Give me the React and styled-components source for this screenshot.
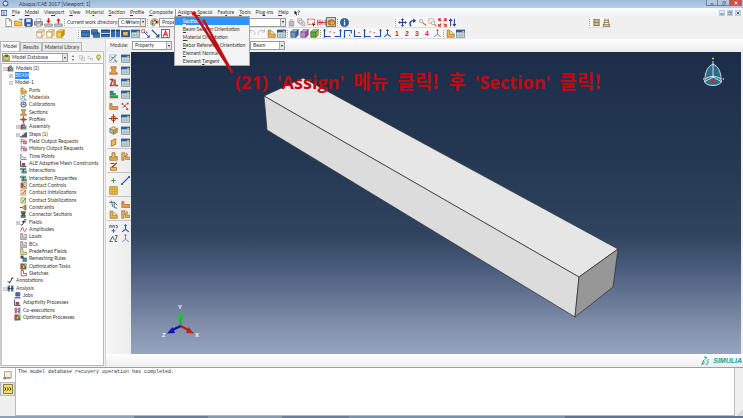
import React from 'react'
import styled, { createGlobalStyle, css } from 'styled-components'

const GlobalStyle = createGlobalStyle`
  * {
    box-sizing: border-box;
  }
  body {
    margin: 0;
    background: #f0f0f0;
    color: #383838;
    font-family: Lato, "Noto Sans CJK KR", sans-serif;
    font-size: 5px;
    line-height: 7px;
  }
  button, select, input {
    margin: 0;
    padding: 0;
    border: 0;
    background: none;
    color: inherit;
    font: inherit;
  }
  ul {
    margin: 0;
    padding: 0;
    list-style: none;
  }
`

/* ---------- icons, all on a 12 x 12 grid ---------- */

const Svg = styled.svg`
  display: block;
  flex: none;
  width: ${p => p.$size || 9}px;
  height: ${p => p.$size || 9}px;
`

const cube = (a, b, c, line) => (
  <g stroke={line} strokeWidth="0.9" strokeLinejoin="round">
    <path d="M1 4l3-3h7L8 4z" fill={a} />
    <path d="M1 4h7v7H1z" fill={b} />
    <path d="M8 4l3-3v7l-3 3z" fill={c} />
  </g>
)
const axes = (d, label, x, y) => (
  <>
    <path d={d} fill="none" stroke="#1c4f9c" strokeWidth="1.5" />
    <path d={`M${x} ${y}l1.5 1.5M${x + 1.5} ${y}l-1.5 1.5`} stroke="#c33" strokeWidth="1" />
    {label && <path d="M2 9.2v2.4M.8 10.4h2.4" stroke="#1c4f9c" />}
  </>
)
const lShape = (fill, extra) => (
  <>
    <path d="M1.5 1.5H5V7h6v4H1.5z" fill={fill} stroke="#9a6a20" strokeWidth="0.9" />
    {extra}
  </>
)

const glyphs = {
  app: (
    <>
      <circle cx="6" cy="6" r="4.2" fill="#d6e6f7" stroke="#3b4d72" strokeWidth="1.5" />
      <path d="M6 0v3M1 9l3-1M11 9l-3-1" stroke="#3b4d72" strokeWidth="1.2" />
    </>
  ),
  model: (
    <>
      <rect x="0.5" y="1" width="11" height="10" fill="#fff" stroke="#254f9b" strokeWidth="1.6" />
      <path d="M3 4h6M3 6h4M3 8.5h6" stroke="#254f9b" strokeWidth="1.3" />
    </>
  ),
  fresh: <path d="M2.5.7h4.8L10 3.4v8H2.5zM7 1v3h3" fill="#fff" stroke="#666" strokeWidth="0.9" />,
  open: (
    <>
      <path d="M.5 10.5V4h4l1 1.2h5v5.3z" fill="#f1c14b" stroke="#a97922" strokeWidth="0.9" />
      <path d="M6 3c1-2 3-2 4.5-.5M10.800 .5v2.300H8.500" fill="none" stroke="#445" strokeWidth="0.9" />
    </>
  ),
  save: (
    <>
      <rect x="1" y="1" width="10" height="10" rx="1" fill="#345fae" stroke="#233c74" />
      <path d="M3 1.5h6v4H3z" fill="#dce6f5" />
      <path d="M4 8h4.5v3H4z" fill="#b8c6dc" />
    </>
  ),
  print: (
    <>
      <path d="M3 1h6v4H3z" fill="#fff" stroke="#777" strokeWidth="0.8" />
      <path d="M.7 5h10.6v4.5H.7z" fill="#b6bcc4" stroke="#555" strokeWidth="0.9" />
      <path d="M3 8h6v3H3z" fill="#f4f4f4" stroke="#777" strokeWidth="0.8" />
    </>
  ),
  dbIn: (
    <>
      <path d="M6 0v5" stroke="#c22" strokeWidth="2" />
      <path d="M3 3.8h6L6 7.3z" fill="#c22" />
      <path d="M1 8h10v3H1z" fill="#c8cdd6" stroke="#666" strokeWidth="0.8" />
    </>
  ),
  dbOut: (
    <>
      <path d="M6 3v4.5" stroke="#c22" strokeWidth="2" />
      <path d="M3 3.6h6L6 .2z" fill="#c22" />
      <path d="M1 8h10v3H1z" fill="#c8cdd6" stroke="#666" strokeWidth="0.8" />
    </>
  ),
  palette: (
    <>
      <path d="M6 1C2 1 .6 4 .8 6.5 1 9.6 4 11 5.5 10.6c1.6-.6 0-2 1.4-2.8 1.5-.8 4.400.2 4.400-2.300C11.300 2.500 8.500 1 6 1z" fill="#e6c99b" stroke="#8d6a35" strokeWidth="0.8" />
      <circle cx="3.5" cy="4.5" r="1.3" fill="#2e8e40" />
      <circle cx="6.7" cy="3.3" r="1.3" fill="#c33" />
      <circle cx="3.5" cy="7.8" r="1.3" fill="#2c58b5" />
      <circle cx="9" cy="5.3" r="1.2" fill="#222" />
    </>
  ),
  lamp: (
    <>
      <path d="M3 4h6v6H3z" fill="#bcbcbc" stroke="#999" />
      <path d="M4 2h4M2 11h8" stroke="#aaa" />
    </>
  ),
  stack: (
    <g fill="#eee" stroke="#999" strokeWidth="0.9">
      <path d="M1 1h5v5H1z" />
      <path d="M3 3h5v5H3z" />
      <path d="M5.5 5.5h5v5h-5zM5.5 5.5l5 5" />
    </g>
  ),
  pick: (
    <>
      <path d="M1 1.5h9v7H1z" fill="none" stroke="#d63a2e" strokeWidth="1.2" strokeDasharray="2 1" />
      <path d="M7 6l4.5 3-2 .5-1 2z" fill="#333" />
    </>
  ),
  cut: (
    <>
      <path d="M1 2v8M11 2v8M4 2v8" stroke="#c33" strokeWidth="1.3" />
      <path d="M1 6h10M8 3.5L5 6l3 2.5" fill="none" stroke="#c33" strokeWidth="1.3" />
    </>
  ),
  orange: (
    <>
      <ellipse cx="6" cy="6" rx="4.8" ry="3.6" fill="#f2a63b" stroke="#8d5a12" />
      <path d="M2 5c2-1.5 6-1.5 8 0M4 3v6" fill="none" stroke="#8d5a12" strokeWidth="0.8" />
    </>
  ),
  info: (
    <>
      <circle cx="6" cy="6" r="5.4" fill="#2e64a7" stroke="#1f4475" strokeWidth="0.8" />
      <path d="M6 5v4.5M6 2.3v1.6" stroke="#fff" strokeWidth="1.7" />
    </>
  ),
  pan: <path d="M6 1v10M1 6h10M4.3 2.7L6 1l1.7 1.7M4.3 9.3L6 11l1.7-1.7M2.7 4.3L1 6l1.7 1.7M9.3 4.3L11 6 9.3 7.7" fill="none" stroke="#223b8f" strokeWidth="1.3" />,
  rotate: (
    <>
      <path d="M4 11C1 7 3 3.5 7.5 3.5" fill="none" stroke="#223b8f" strokeWidth="1.9" />
      <path d="M6.8.5L11 3.5 6.8 6.7z" fill="#223b8f" />
    </>
  ),
  zoom: (
    <>
      <path d="M6 6l5 4" stroke="#c6873e" strokeWidth="1.8" />
      <circle cx="4" cy="4" r="2.4" fill="#eef3f7" stroke="#99a" />
    </>
  ),
  zoomBox: (
    <>
      <path d="M1 1h7v6H1z" fill="none" stroke="#d55" strokeDasharray="1.5 1" />
      <path d="M8 8l3.5 3" stroke="#c6873e" strokeWidth="1.7" />
      <circle cx="6.8" cy="6.5" r="2.3" fill="#fff" stroke="#99a" />
    </>
  ),
  fit: <path d="M1 4V1h3M8 1h3v3M11 8v3H8M4 11H1V8M1 1l3.5 3.5M11 1L7.5 4.5M1 11l3.5-3.5M11 11L7.5 7.5" fill="none" stroke="#d8352a" strokeWidth="1.5" />,
  cycle: <path d="M3.5 11V1.5M1.5 4l2-2.5 2 2.5M8.5 1v9.5M6.5 8l2 2.5 2-2.5" fill="none" stroke="#223b8f" strokeWidth="1.4" />,
  book: <path d="M2.5 1v10M9.5 1v10M2.5 2h7M2.5 4h7M2.5 6h7M2.5 8h7M2.5 10h7" stroke="#8a713a" strokeWidth="1.2" />,
  road: <path d="M4 1L2 11M8 1l2 10M3.5 3h5M3 6h6M1 9h10M1 11h10" stroke="#8a713a" strokeWidth="1.2" />,
  wire: cube('#fff', 'none', '#fff', '#b58a2e'),
  hidden: cube('#fbf5df', '#fdf9ec', '#efe3b8', '#b58a2e'),
  solid: cube('#ffe681', '#f7cf3a', '#c9971c', '#a8821c'),
  win1: <path d="M.5 2h11v8.5H.5zM.5 4.5h11" fill="#3d7ab8" stroke="#204a7c" />,
  win2: <path d="M.5 1h8v6h-8zM3 5h8.5v6H3z" fill="#3d7ab8" stroke="#204a7c" />,
  win3: (
    <>
      <path d="M0 1h12v4.500H0zM0 6.500h12V11H0z" fill="#2f6dae" />
      <path d="M0 1h12v1.500H0zM0 6.500h12V8H0z" fill="#1d4472" />
    </>
  ),
  win4: (
    <>
      <path d="M0 1h5.500v10H0zM6.500 1H12v10H6.500z" fill="#2f6dae" />
      <path d="M0 1h5.500v2H0zM6.500 1H12v2H6.500z" fill="#1d4472" />
    </>
  ),
  frame: (
    <>
      <rect x="0.5" y="2" width="11" height="8.5" fill="#305f98" stroke="#24456c" />
      <path d="M3 4h6v4.500H3z" fill="#f2b95b" />
    </>
  ),
  table: (
    <>
      <rect x="0.5" y="1.5" width="11" height="9.5" fill="#dfe9ee" stroke="#6c8798" />
      <path d="M0 1h12v3.500H0z" fill="#2b5d91" />
      <path d="M1 7h10M1 9h10M4.3 4.5v6M7.8 4.5v6" stroke="#8fa4b1" strokeWidth="0.8" />
      <path d="M8 2.5h3v2H8z" fill="#e0b63d" />
    </>
  ),
  swap: (
    <>
      <path d="M1 1h4v4H1z" fill="#fff" stroke="#c33" />
      <path d="M4 4l7 7M7 3.5L8.5 6M8 11h3V8" fill="none" stroke="#2e4f99" strokeWidth="1.3" />
    </>
  ),
  arrow: <path d="M1 1l9.5 9.5M6.5 10.500h4v-4" fill="none" stroke="#244fa3" strokeWidth="1.5" />,
  text: (
    <>
      <rect x="0.7" y="0.7" width="10.6" height="10.6" fill="#fff" stroke="#444" />
      <path d="M3 10l3-7.5L9 10M4 7.5h4" fill="none" stroke="#d22" strokeWidth="1.4" />
    </>
  ),
  undo: <path d="M2 3c5-3 10 0 8 5M2 0v4h4" fill="none" stroke="#bbb" strokeWidth="1.2" />,
  redo: <path d="M10 3C5 0 0 3 2 8M10 0v4H6" fill="none" stroke="#bbb" strokeWidth="1.2" />,
  part: lShape('#eab44a', <path d="M6 2.5L10.500 7" stroke="#8b651b" />),
  mesh1: cube('#b7d1ea', '#6d98c4', '#3b699b', '#345274'),
  mesh2: cube('#f0c9e8', '#c48ac4', '#975b9b', '#6a4274'),
  mesh3: cube('#bcd98e', '#5ea83e', '#e0b23a', '#3e6a24'),
  ax1: axes('M2 2v8h8M1 3l1-2 1 2', true, 9, 3),
  ax2: axes('M10 2v8H2M9 3l1-2 1 2', false, 1, 4),
  ax3: axes('M2 11V2h9v4', true, 8, 8),
  ax4: axes('M2 1v9h9', false, 7, 4),
  triad: <path d="M6 1v6l-4.500 3.500M6 7l4.500 3.500M4.500 2.500L6 1l1.500 1.500" fill="none" stroke="#2c5db0" strokeWidth="1.400" />,
  tower: <path d="M4 5.500v-2H2.500V1h7v2.500H8v2L9 9h2v2H1V9h2z" fill="#e3a04e" stroke="#9b6322" strokeWidth="0.9" />,
  beamMgr: (
    <>
      <path d="M1 2h4L2 10h4M8 2v8h4" fill="none" stroke="#b8352b" strokeWidth="1.800" />
      <path d="M6.500 2v8" stroke="#3c8b42" strokeWidth="1.500" />
    </>
  ),
  layers: (
    <>
      <path d="M1 1h5v3H1z" fill="#2f6fc0" />
      <path d="M1 4h8v3H1z" fill="#2d9a47" />
      <path d="M1 7h11v2.500H1z" fill="#2ca53f" />
      <path d="M1 9.500h11V11H1z" fill="#b7364f" />
    </>
  ),
  material: (
    <>
      <path d="M1 1h7v10H1z" fill="#eef4f8" stroke="#8aa" strokeWidth="0.8" />
      <path d="M2 9l8-8M3 4l2 1M7 8l3 2" stroke="#2e6096" strokeWidth="1.300" />
      <circle cx="10" cy="10" r="1.500" fill="#c9a23b" />
    </>
  ),
  scatter: (
    <>
      <path d="M1 2l4 3 4-3M2 8l3-3 5 5" fill="none" stroke="#777" />
      <g fill="#cc3a30">
        <circle cx="2" cy="2.500" r="1.300" />
        <circle cx="9" cy="2" r="1.300" />
        <circle cx="5" cy="5.500" r="1.300" />
        <circle cx="8" cy="9.500" r="1.300" />
      </g>
    </>
  ),
  lpart: <path d="M1 2h3v4h8v4H1z" fill="#e39a4c" stroke="#9b6328" strokeWidth="0.8" />,
  target: (
    <>
      <circle cx="6" cy="6" r="3.200" fill="#f1b09a" stroke="#a43c22" />
      <path d="M6 0v12M0 6h12" stroke="#a43c22" strokeWidth="1.400" />
    </>
  ),
  box: (
    <g stroke="#6d6a52" strokeWidth="0.8">
      <path d="M6 1l5 2.500L6 6 1 3.500z" fill="#f1d088" />
      <path d="M1 3.500L6 6v5L1 8.500z" fill="#9eb6cf" />
      <path d="M11 3.500L6 6v5l5-2.500z" fill="#d59c3e" />
    </g>
  ),
  plate: <path d="M3 3.500L9 1v7.500L3 11z" fill="#f0b550" stroke="#8e6a2c" />,
  press: (
    <>
      <path d="M4 1h4v5h3v5H1V6h3z" fill="#edc06a" stroke="#8b6a2a" />
      <path d="M2 8h8" stroke="#8b6a2a" />
    </>
  ),
  pressCut: (
    <>
      <path d="M1 1v10h3V6h2v4h6V7H8V4H5V1z" fill="#e9ad5c" stroke="#8b6a2a" strokeWidth="0.8" />
      <path d="M7 1l2 3" stroke="#c33" />
    </>
  ),
  brush: (
    <>
      <path d="M2 7h8v4H2z" fill="#edc06a" stroke="#8b6a2a" />
      <path d="M10.500 1L4 7M2 2h5" stroke="#93392f" strokeWidth="1.600" />
    </>
  ),
  plus: <path d="M6 3v6M3 6h6" stroke="#3c9d41" strokeWidth="1.400" />,
  line: (
    <>
      <path d="M1.500 10.500l9-9" stroke="#224a86" strokeWidth="1.400" />
      <path d="M0 9.500h2.500V12H0zM9.500 0H12v2.500H9.500z" fill="#2e64a7" />
    </>
  ),
  grid: (
    <>
      <rect x="1" y="1" width="10" height="10" fill="#f3c64b" stroke="#a9822b" />
      <path d="M4.300 1v10M7.700 1v10M1 4.300h10M1 7.700h10" stroke="#b98d2d" strokeWidth="0.8" />
    </>
  ),
  split: <path d="M0 3h7l4 4M3 1l2 8M7 3v7l4 1" fill="none" stroke="#39677e" strokeWidth="1.200" />,
  datum: (
    <>
      <path d="M1 5V2h2v3M5 5V2h2v3M9 2h2v3H9" fill="none" stroke="#444" />
      <path d="M6 6.500v5M3.500 9h5" stroke="#2d62b4" strokeWidth="1.300" />
    </>
  ),
  sketch: <path d="M1 10l4-7 2 5M1 10h4M8 2h3L8 10h3" fill="none" stroke="#555" strokeWidth="1.200" />,
  triad2: (
    <>
      <path d="M6 1v6l-4.500 3.500M6 7l4.500 3.500" fill="none" stroke="#6684ab" strokeWidth="1.200" />
      <circle cx="6" cy="1.500" r="1.200" fill="#c44" />
    </>
  ),
  models: (
    <>
      <path d="M1 3h3v8H1z" fill="#8e3b33" />
      <path d="M4 1h4v10H4z" fill="#3d4b55" />
      <path d="M8 4h3v7H8z" fill="#688898" />
      <path d="M5 3h2M5 6h2M5 9h2" stroke="#fff" />
    </>
  ),
  calib: (
    <>
      <circle cx="6" cy="6" r="4.500" fill="#dce2f3" stroke="#39457f" strokeWidth="1.600" />
      <path d="M3 6h6M6 3v3" stroke="#39457f" />
    </>
  ),
  steps: <path d="M0 9h3V7h3V4h3V2h3v9H0z" fill="#555f62" />,
  history: (
    <>
      <path d="M2 1v10M2 3h6M2 6h4" stroke="#666" strokeWidth="1.200" />
      <path d="M6 5h5v5H6z" fill="#d89f9a" stroke="#934" />
    </>
  ),
  times: <path d="M1.500 1v10h10M3 5l3 3h4" fill="none" stroke="#43638a" strokeWidth="1.300" />,
  ale: (
    <>
      <path d="M1 1v10h10" fill="none" stroke="#333" strokeWidth="1.500" />
      <path d="M3 5h6v5H3z" fill="#a04560" />
    </>
  ),
  inter: (
    <>
      <path d="M1 2h9v3H1zM3 7h8v3.500H3z" fill="#7dab98" stroke="#2d6656" />
      <path d="M6 4v4" stroke="#333" strokeWidth="1.400" />
    </>
  ),
  control: (
    <>
      <path d="M1 1h4v10H1z" fill="#d2473b" />
      <path d="M6 1h5v10H6z" fill="#ead36c" stroke="#777" />
      <path d="M3 3l6 6" stroke="#374a94" strokeWidth="1.500" />
    </>
  ),
  coexec: (
    <>
      <path d="M1 1h4v10H1z" fill="#a874a8" />
      <path d="M7 1h4v10H7z" fill="#6f8fc4" />
      <path d="M3 4h6M3 8h6" stroke="#c65b5b" strokeWidth="1.500" />
    </>
  ),
  init: (
    <>
      <path d="M1.500 1.500h8v9h-8z" fill="#fbe4bf" stroke="#c63" />
      <path d="M4 9l6-7" stroke="#c33" strokeWidth="1.600" />
    </>
  ),
  stab: (
    <>
      <path d="M1.500 1.500h8v9h-8z" fill="#e8eea1" stroke="#684" />
      <path d="M4 9l6-7" stroke="#3b7d38" strokeWidth="1.600" />
    </>
  ),
  constraint: (
    <>
      <path d="M0 6h4M10 1v10" stroke="#333" strokeWidth="1.500" />
      <path d="M8 2v8L3 6z" fill="#edbd34" stroke="#6e5615" />
    </>
  ),
  connector: <path d="M2 1h7v3H2zM4 4h4v3H4zM2 7h7v4H2z" fill="#767d77" stroke="#3a403b" />,
  field: <path d="M11 1.500C5 0 7 5 5.500 8s-3 3-4.500 2M3 5h7" fill="none" stroke="#222" strokeWidth="1.700" />,
  amp: <path d="M0 9C3 9 2 2 4 2s2 8 4 8 1-6 4-6" fill="none" stroke="#b4453e" strokeWidth="1.300" />,
  load: (
    <>
      <path d="M1 1v10h10V7H5V1z" fill="#c8ccd2" stroke="#666b77" />
      <path d="M7 3h4v3" fill="none" stroke="#8c4754" strokeWidth="1.300" />
    </>
  ),
  predef: <path d="M1 1v10h10V7H5V1z" fill="#eed7a0" stroke="#5d7d3b" />,
  remesh: (
    <>
      <path d="M1 1h5v5H1z" fill="#3c4855" />
      <path d="M5 5h6v6H5z" fill="#5d8dc0" stroke="#27466d" />
    </>
  ),
  optim: (
    <>
      <path d="M1 1h10v10H1z" fill="#2e8a57" />
      <path d="M1 1h4v10H1z" fill="#d1473b" />
      <path d="M5 4l3 2-3 3z" fill="#f3e27a" />
      <path d="M8 1h3v4H8z" fill="#e6a436" />
    </>
  ),
  sketches: <path d="M2 1v9h9V6H6V1z" fill="#fff" stroke="#a33c37" strokeWidth="1.400" />,
  note: <path d="M4 11l5-9M1 8l4 1M7 2h4" fill="none" stroke="#333" strokeWidth="1.700" />,
  analysis: (
    <>
      <path d="M1 1h4v10H1zM7 1h4v10H7z" fill="#4b78a8" />
      <path d="M1 6h10M3 3v5M9 3v5" stroke="#1d3552" strokeWidth="1.300" />
    </>
  ),
  job: (
    <>
      <path d="M3 1h7v6H3z" fill="#576ea8" stroke="#2b3768" />
      <path d="M1 9h10v2H1z" fill="#434e73" />
    </>
  ),
  bulb: (
    <>
      <circle cx="6" cy="5" r="3.500" fill="#dfe86a" stroke="#6a7a22" />
      <path d="M4.500 10h3" stroke="#555" strokeWidth="1.600" />
    </>
  ),
  database: (
    <>
      <path d="M1 3h10v8H1z" fill="#dcc35a" stroke="#655c29" />
      <path d="M3 1h6v4H3z" fill="#576d40" />
    </>
  ),
  spin: <path d="M6 0l2.500 4h-5zM6 12L3.500 8h5z" fill="#777" />,
  copy: <path d="M1 1h6v7H1zM5 4h6v7H5z" fill="#eee" stroke="#aaa" />,
  tree: <path d="M2 1v6h4M2 3h4M7 6h4v4H7z" fill="none" stroke="#aaa" />,
  help: (
    <>
      <path d="M1 1v8l2-2 1.500 4L6 10.500l-1.500-4H7z" fill="#111" />
      <path d="M7.500 3c0-2 3.500-2 3.500 0S9 4.500 9 7M9 8.500V10" fill="none" stroke="#111" strokeWidth="1.300" />
    </>
  ),
  log: (
    <>
      <path d="M2 1h9v8H2z" fill="#f7f3d9" stroke="#8c8a68" />
      <path d="M.500 8h4v3h-4z" fill="#8a8752" />
      <path d="M5 9.500h5" stroke="#555" />
    </>
  ),
  prompt: (
    <>
      <path d="M.500.500h11v11H.500z" fill="#f7dd5b" stroke="#6a6133" />
      <path d="M2 4l1.500 2L2 8M5 4l1.500 2L5 8M8 4l1.500 2L8 8" fill="none" stroke="#222" strokeWidth="1.100" />
    </>
  ),
}

const Icon = ({ name, size }) => (
  <Svg viewBox="0 0 12 12" $size={size} aria-hidden="true">{glyphs[name]}</Svg>
)

/* ---------- window frame ---------- */

const Window = styled.div`
  display: flex;
  flex-direction: column;
  min-height: 100vh;
  background: #f0f0f0;
`

const TitleBar = styled.header`
  display: flex;
  align-items: center;
  gap: 10px;
  height: 8px;
  padding: 0 1px 1px 2px;
  background: linear-gradient(#9dbbd9, #b7cee6);
`

const Title = styled.span`
  flex: 1;
  color: #2b3a4c;
  line-height: 6px;
`

const WindowButtons = styled.div`
  display: flex;
  align-self: flex-start;
`

const WindowButton = styled.button`
  display: grid;
  place-items: center;
  width: 12px;
  height: 6px;
  border: 1px solid #6d8299;
  border-top: 0;
  border-left-width: ${p => (p.$first ? 1 : 0)}px;
  background: ${p => (p.$close ? '#c9553f' : '#b4c8dc')};
  color: ${p => (p.$close ? '#fff' : '#45566a')};
`

const MenuBar = styled.nav`
  display: flex;
  align-items: center;
  gap: 5px;
  height: 9px;
  padding: 0 2px 0 1px;
  background: linear-gradient(#fdfdfd, #eef1f5);
`

const MenuEntry = styled.div`
  position: relative;
`

const MenuButton = styled.button`
  display: block;
  white-space: nowrap;
  ${p => p.$open && css`
    box-shadow: -2px 0 #f7f7f7, -3px 0 #999;
  `}
`

const DropDown = styled.div`
  position: absolute;
  z-index: 5;
  top: 8px;
  left: -3px;
  width: 74px;
  background: #f4f4f4;
  box-shadow: 0 0 0 1px #a6a6a6;
`

const DropItem = styled.button`
  display: block;
  width: 100%;
  height: 8px;
  padding-left: 8px;
  text-align: left;
  white-space: nowrap;
  background: ${p => (p.$active ? '#3093f5' : 'transparent')};
  color: ${p => (p.$active ? '#fff' : '#383838')};
`

const ChildButtons = styled.div`
  display: flex;
  gap: 2px;
  margin-left: auto;
`

const ChildButton = styled.button`
  display: grid;
  place-items: center;
  width: 6px;
  height: 6px;
  border: 1px solid #b6cbdc;
  background: #e2edf6;
  color: #456;
`

/* ---------- toolbars ---------- */

const ToolRow = styled.div`
  display: flex;
  height: 11px;
  overflow: hidden;
  background: #f0f0f0;
`

const ToolBar = styled.div`
  display: flex;
  flex: none;
  align-items: center;
  margin-left: ${p => p.$before || 0}px;
  border-bottom: 1px solid #dcdcdc;
  background: #f8f8f8;
`

const Tool = styled.button`
  display: grid;
  place-items: center;
  width: 10px;
  height: 10px;
  color: #d3281e;
  font-family: "Liberation Sans", sans-serif;
  font-size: 7px;
  font-weight: 700;
  ${p => p.$pressed && css`
    background: #ccd0d6;
    box-shadow: inset 0 0 0 1px #777;
  `}
`

const Grip = styled.span`
  width: 1px;
  height: 7px;
  margin: 0 1px;
  border-left: 1px dotted #999;
`

const ToolLabel = styled.label`
  width: ${p => p.$width}px;
  padding-left: 1px;
  white-space: nowrap;
`

const SelectBox = styled.span`
  display: flex;
  flex: none;
  width: ${p => p.$width}px;
  height: 9px;
  border: 1px solid #9a9a9a;
  background: #fff;
`

const SelectInput = styled.select`
  flex: 1;
  min-width: 0;
  padding-left: 2px;
  appearance: none;
  line-height: 7px;
`

const Arrow = styled.span`
  display: grid;
  flex: none;
  place-items: center;
  width: 5px;
  border-left: 1px solid #aaa;
  background: #e6e6e6;

  &::after {
    content: "";
    border: 1px solid transparent;
    border-top: 2px solid #222;
    border-bottom: 0;
  }
`

/* ---------- body ---------- */

const Body = styled.main`
  display: flex;
  flex: 1;
`

const SidePanel = styled.aside`
  display: flex;
  flex: none;
  flex-direction: column;
  width: 106px;
  padding: 2px 1px 1px 0;
  border-right: 1px solid #d5d5d5;
`

const Tabs = styled.div`
  display: flex;
  align-items: flex-end;
  height: 10px;
`

const Tab = styled.button`
  height: ${p => (p.$active ? 10 : 9)}px;
  padding: 0 2px;
  border: 1px solid #b5b5b5;
  border-bottom: 0;
  border-radius: 1px 1px 0 0;
  background: ${p => (p.$active ? '#fff' : '#e9e9e9')};
  white-space: nowrap;
`

const DatabaseRow = styled.div`
  display: flex;
  align-items: center;
  justify-content: space-between;
  height: 12px;
  padding: 0 1px;
  border: 1px solid #c4c4c4;
  border-bottom: 0;
  background: #f6f6f6;
`

const Tree = styled.ul`
  flex: 1;
  padding-top: 1px;
  border: 1px solid #bbb;
  border-left: 2px solid #ccc;
  background: #fff;
`

const TreeRow = styled.li`
  display: flex;
  align-items: center;
  height: 7px;
  padding-left: ${p => p.$indent}px;
  white-space: nowrap;

  &:nth-child(3n) {
    margin-bottom: 1px;
  }
`

const Expander = styled.span`
  display: grid;
  flex: none;
  place-items: center;
  width: 5px;
  margin-right: ${p => (p.$tight ? 2 : 0)}px;
`

const TreeText = styled.span`
  margin-left: ${p => (p.$icon ? 2 : 0)}px;
  background: ${p => (p.$selected ? '#2f8bea' : 'transparent')};
  color: ${p => (p.$selected ? '#d8eaff' : '#383838')};
`

const Work = styled.div`
  display: flex;
  flex: 1;
  flex-direction: column;
  min-width: 0;
`

const ContextBar = styled.div`
  display: flex;
  align-items: center;
  height: 13px;
  padding: 0 3px;
  background: linear-gradient(#fdfdfd, #ececec);
`

const Spacer = styled.span`
  width: ${p => p.$width}px;
`

const Middle = styled.div`
  display: flex;
  flex: 1;
  padding-right: 2px;
`

const ToolBox = styled.div`
  flex: none;
  width: 25px;
  padding-left: 1px;
  background: linear-gradient(90deg, #f7f7f7, #ececec);
`

const ToolGroup = styled.div`
  display: grid;
  grid-template-columns: 12px 12px;
  grid-auto-rows: ${p => (p.$first ? 12 : 10)}px;
  padding: ${p => (p.$first ? 0 : '2px 0 1px')};
  border-top: ${p => (p.$first ? 0 : '1px solid #c6c6c6')};
`

const BoxTool = styled.button`
  display: grid;
  place-items: center;
`

const Stage = styled.section`
  position: relative;
  flex: 1;
  background: linear-gradient(#1c2d4a, #243853 35%, #30445f 61%, #4b5d7d 72%, #8492ae 92%, #96a5bf);
`

const Scene = styled.svg`
  position: absolute;
  inset: 0;
  width: 100%;
  height: 100%;
  font: 700 6px "Liberation Sans", sans-serif;
`

const Callout = styled.p`
  position: absolute;
  z-index: 6;
  top: 17px;
  left: 104px;
  display: flex;
  align-items: baseline;
  gap: 9px;
  margin: 0;
  color: #c00a10;
  font: 700 18px/24px "Open Sans", "Noto Sans CJK KR", sans-serif;
  white-space: nowrap;
`

const Korean = styled.span`
  font-family: "Noto Sans CJK KR", sans-serif;
  font-size: 19px;
`

const Pointer = styled.svg`
  position: absolute;
  z-index: 7;
  top: -42px;
  left: 59px;
  width: 46px;
  height: 66px;
  pointer-events: none;
`

const Brand = styled.div`
  display: flex;
  align-items: center;
  justify-content: flex-end;
  gap: 3px;
  height: 13px;
  padding-right: 1px;
  background: linear-gradient(#fff, #ededed);
  color: #17a08c;
  font: italic 700 7px/9px "Liberation Sans", sans-serif;
`

const Console = styled.footer`
  display: flex;
  height: 49px;
  border-top: 1px solid #a0a0a0;
  background: #f0f0f0;
`

const ConsoleTabs = styled.div`
  display: flex;
  flex-direction: column;
  width: 15px;
`

const ConsoleTab = styled.button`
  display: grid;
  place-items: center;
  height: 14px;
  border: 1px solid ${p => (p.$active ? '#fff' : '#bbb')};
  background: ${p => (p.$active ? '#fff' : '#e4e4e4')};
`

const Output = styled.output`
  flex: 1;
  padding: 1px 2px;
  border: 1px solid #bbb;
  border-top: 0;
  background: #fff;
  font: 5px/7px "Liberation Mono", monospace;
`

const Corner = styled.div`
  display: flex;
  align-items: flex-end;
  justify-content: flex-end;
  width: 8px;
`

const TaskEdge = styled.div`
  height: 2px;
  background: linear-gradient(90deg, #8fa1b3 0 18%, #6d7f92 18% 28%, #8b9aab 28% 38%, #6d7f92 38% 47%, #7c90a6 47% 76%, #62758a 76%);
`

/* ---------- data ---------- */

// the underscore sits before the mnemonic letter
const menus = ['_File', '_Model', 'Vie_wport', '_View', 'Ma_terial', '_Section', '_Profile', '_Composite', '_Assign', '_Special', 'Fea_ture', '_Tools', 'Plu_g-ins', '_Help']
const assignItems = ['_Section', '_Beam Section Orientation', '_Material Orientation', '_Rebar Reference Orientation', '_Element Normal', 'Element _Tangent']

const tree = [
  ['Models (2)', 'models', 0, '-'],
  ['BEAM', null, 6, '+'],
  ['Model-1', null, 6, '-'],
  ['Parts', 'part', 13],
  ['Materials', 'material', 13],
  ['Calibrations', 'calib', 13],
  ['Sections', 'tower', 13],
  ['Profiles', 'target', 13],
  ['Assembly', 'models', 13, '+'],
  ['Steps (1)', 'steps', 13, '+'],
  ['Field Output Requests', 'history', 13],
  ['History Output Requests', 'history', 13],
  ['Time Points', 'times', 13],
  ['ALE Adaptive Mesh Constraints', 'ale', 13],
  ['Interactions', 'inter', 13],
  ['Interaction Properties', 'inter', 13],
  ['Contact Controls', 'control', 13],
  ['Contact Initializations', 'init', 13],
  ['Contact Stabilizations', 'stab', 13],
  ['Constraints', 'constraint', 13],
  ['Connector Sections', 'connector', 13],
  ['Fields', 'field', 13, '+'],
  ['Amplitudes', 'amp', 13],
  ['Loads', 'load', 13],
  ['BCs', 'load', 13],
  ['Predefined Fields', 'predef', 13],
  ['Remeshing Rules', 'remesh', 13],
  ['Optimization Tasks', 'optim', 13],
  ['Sketches', 'sketches', 13],
  ['Annotations', 'note', 0],
  ['Analysis', 'analysis', 0, '-'],
  ['Jobs', 'job', 7],
  ['Adaptivity Processes', 'ale', 7],
  ['Co-executions', 'coexec', 7],
  ['Optimization Processes', 'optim', 7],
]

const toolGroups = [
  ['material', 'table', 'tower', 'table', 'beamMgr', 'table', 'layers', 'table', 'lpart', 'scatter', 'target', 'table', 'box', 'table', 'plate', 'table'],
  ['press', 'pressCut', 'brush'],
  ['plus', 'line', 'grid'],
  ['split', 'lpart', 'part', 'pressCut'],
  ['datum', 'triad', 'sketch', 'triad2'],
]

const Mnemonic = ({ text }) => {
  const at = text.indexOf('_')
  return <>{text.slice(0, at)}<u>{text[at + 1]}</u>{text.slice(at + 2)}</>
}

const Tools = ({ names, pressed }) => names.map((name, i) => (
  <Tool key={i} aria-label={name} $pressed={name === pressed}>
    <Icon name={name} />
  </Tool>
))

const Select = ({ id, label, width, options, icon }) => (
  <SelectBox $width={width}>
    {icon && <Icon name={icon} size={7} />}
    <SelectInput id={id} aria-label={label}>
      {options.map(o => <option key={o}>{o}</option>)}
    </SelectInput>
    <Arrow />
  </SelectBox>
)

const Cross = () => (
  <Svg viewBox="0 0 12 12" $size={4}>
    <path d="M2 2l8 8M10 2l-8 8" stroke="currentColor" strokeWidth="3" />
  </Svg>
)
const Bar = () => (
  <Svg viewBox="0 0 12 12" $size={4}>
    <path d="M1 9h10" stroke="currentColor" strokeWidth="3" />
  </Svg>
)
const Square = () => (
  <Svg viewBox="0 0 12 12" $size={4}>
    <path d="M1 4h7v7H1zM4 4V1h7v7H8" fill="none" stroke="currentColor" strokeWidth="1.5" />
  </Svg>
)

const Viewport = () => (
  <Stage>
    <Scene viewBox="0 0 610 302" preserveAspectRatio="xMidYMid meet">
      <g stroke="#2a2e33" strokeWidth="0.7" strokeLinejoin="round">
        <path d="M133 44l39-18 315 171-39 28z" fill="#e6e6e6" />
        <path d="M133 44l315 181-4 40L136 78z" fill="#dcdcdc" />
        <path d="M448 225l39-28-5 38-38 30z" fill="#979797" />
      </g>
      <path d="M49.5 274v-10" stroke="#1cb42c" strokeWidth="2.5" />
      <path d="M46.5 266l3-6.5 3 6.5z" fill="#1fc431" />
      <path d="M49.5 274l8 4" stroke="#b81818" strokeWidth="2.2" />
      <path d="M57.500 275l5.500 6.500-8-.5z" fill="#c91d1d" />
      <path d="M49.5 274l-8 4" stroke="#1111a8" strokeWidth="2.2" />
      <path d="M41.500 275L36 281.500l8-.5z" fill="#1010c4" />
      <g fill="#f2f5f8">
        <text x="47" y="257">Y</text>
        <text x="64" y="285">X</text>
        <text x="31" y="285">Z</text>
      </g>
      <g fill="#2b6f87" stroke="#dce8f4" strokeWidth="0.9">
        <path d="M582 12c-5 2-8 8-8 15l8-3 8 3c0-7-3-13-8-15z" />
        <ellipse cx="582" cy="29" rx="8.5" ry="4.5" />
        <path d="M582 9v17M582 25l-9 5M582 25l9 5" fill="none" />
      </g>
      <circle cx="582" cy="29" r="1.5" fill="#d22" />
      <path d="M581 6.5h2M572 27h1.500M591.500 27h1.500" stroke="#e6c33a" strokeWidth="1.5" />
    </Scene>
    <Callout>
      <span>(21)</span>
      <span>'Assign'</span>
      <Korean>메뉴</Korean>
      <Korean>클릭!</Korean>
      <Korean>후</Korean>
      <span>'Section'</span>
      <Korean>클릭!</Korean>
    </Callout>
    <Pointer viewBox="0 0 46 66">
      <path d="M4 3l38 59M14 11l28 51" stroke="#bd1016" strokeWidth="2.5" strokeLinecap="round" />
      <circle cx="4" cy="3.5" r="2.2" fill="#cc1118" />
      <circle cx="14" cy="11" r="1.8" fill="#b3262b" />
    </Pointer>
  </Stage>
)

const App = () => {
  return (
    <>
      <GlobalStyle />
      <Window>
        <TitleBar>
          <Icon name="app" size={7} />
          <Title>Abaqus/CAE 2017 [Viewport: 1]</Title>
          <WindowButtons>
            <WindowButton $first aria-label="Minimize"><Bar /></WindowButton>
            <WindowButton aria-label="Restore"><Square /></WindowButton>
            <WindowButton $close aria-label="Close"><Cross /></WindowButton>
          </WindowButtons>
        </TitleBar>
        <MenuBar>
          <Icon name="model" size={6} />
          {menus.map(m => (
            <MenuEntry key={m}>
              <MenuButton $open={m === '_Assign'}><Mnemonic text={m} /></MenuButton>
              {m === '_Assign' && (
                <DropDown>
                  {assignItems.map((item, i) => (
                    <DropItem key={item} $active={i === 0}><Mnemonic text={item} /></DropItem>
                  ))}
                </DropDown>
              )}
            </MenuEntry>
          ))}
          <Icon name="help" size={6} />
          <ChildButtons>
            <ChildButton aria-label="Minimize viewport"><Bar /></ChildButton>
            <ChildButton aria-label="Restore viewport"><Square /></ChildButton>
            <ChildButton aria-label="Close viewport"><Cross /></ChildButton>
          </ChildButtons>
        </MenuBar>

        <ToolRow>
          <ToolBar $before={3}>
            <Tools names={['fresh', 'open', 'save', 'print', 'dbIn', 'dbOut']} />
            <Grip />
            <ToolLabel htmlFor="workdir" $width={52}>Current work directory:</ToolLabel>
            <Select id="workdir" width={28} options={['C:₩temp']} />
            <Grip />
            <Tools names={['palette']} />
            <Select label="Color coding" width={127} options={['Property defaults']} />
            <Tools names={['lamp', 'stack', 'pick', 'cut', 'orange']} pressed="orange" />
            <Grip />
            <Tools names={['info']} />
          </ToolBar>
          <ToolBar $before={45}>
            <Grip />
            <Tools names={['pan', 'rotate', 'zoom', 'zoomBox', 'fit', 'cycle']} />
          </ToolBar>
          <ToolBar $before={131}>
            <Grip />
            <Tools names={['book', 'road']} />
          </ToolBar>
        </ToolRow>
        <ToolRow>
          <ToolBar $before={35}>
            <Tools names={['wire', 'hidden', 'solid']} />
          </ToolBar>
          <ToolBar $before={12}>
            <Grip />
            <Tools names={['win1', 'win2', 'win3', 'win4', 'frame', 'table', 'swap', 'arrow', 'text']} />
          </ToolBar>
          <ToolBar $before={76}>
            <Tools names={['undo', 'redo', 'part', 'table']} />
            <Grip />
            <Tools names={['mesh1', 'mesh2', 'mesh3']} />
            <Grip />
            <Tools names={['ax1', 'ax2', 'ax3', 'ax4', 'ax1', 'ax2', 'triad']} />
            {[1, 2, 3, 4].map(n => <Tool key={n}>{n}</Tool>)}
            <Tools names={['triad2']} />
            <Grip />
            <Tools names={['part', 'table']} />
          </ToolBar>
        </ToolRow>

        <Body>
          <SidePanel>
            <Tabs>
              <Tab $active>Model</Tab>
              <Tab>Results</Tab>
              <Tab>Material Library</Tab>
            </Tabs>
            <DatabaseRow>
              <Select label="Database" icon="database" width={66} options={['Model Database']} />
              <Icon name="spin" size={6} />
              <Icon name="copy" size={6} />
              <Icon name="tree" size={6} />
              <Icon name="bulb" size={7} />
            </DatabaseRow>
            <Tree>
              {tree.map(([text, icon, indent, mark]) => (
                <TreeRow key={text} $indent={indent}>
                  <Expander $tight={!icon}>
                    {mark && (
                      <Svg viewBox="0 0 12 12" $size={4}>
                        <path d={mark === '+' ? 'M1 1h10v10H1zM3 6h6M6 3v6' : 'M1 1h10v10H1zM3 6h6'} fill="#fff" stroke="#888" strokeWidth="1.5" />
                      </Svg>
                    )}
                  </Expander>
                  {icon && <Icon name={icon} size={7} />}
                  <TreeText $icon={!!icon} $selected={text === 'BEAM'}>{text}</TreeText>
                </TreeRow>
              ))}
            </Tree>
          </SidePanel>

          <Work>
            <ContextBar>
              <ToolLabel htmlFor="module" $width={23}>Module:</ToolLabel>
              <Select id="module" width={40} options={['Property']} />
              <Spacer $width={78} />
              <Select label="Part" width={35} options={['Beam']} />
            </ContextBar>
            <Middle>
              <ToolBox>
                {toolGroups.map((names, g) => (
                  <ToolGroup key={g} $first={g === 0}>
                    {names.map((name, i) => (
                      <BoxTool key={i} aria-label={name}><Icon name={name} /></BoxTool>
                    ))}
                  </ToolGroup>
                ))}
              </ToolBox>
              <Viewport />
            </Middle>
            <Brand>
              <Svg viewBox="0 0 12 12" $size={9}>
                <path d="M4 1l4 1-3 3M4 5L1 11c3 0 4-2 3-4M11 5C8 5 7 7 9 8s0 3-3 3" fill="none" stroke="#17a08c" strokeWidth="1.3" />
              </Svg>
              SIMULIA
            </Brand>
          </Work>
        </Body>

        <Console>
          <ConsoleTabs>
            <ConsoleTab $active aria-label="Messages"><Icon name="log" /></ConsoleTab>
            <ConsoleTab aria-label="Command line"><Icon name="prompt" size={10} /></ConsoleTab>
          </ConsoleTabs>
          <Output>The model database recovery operation has completed.</Output>
          <Corner>
            <Svg viewBox="0 0 12 12" $size={6}>
              <path d="M9 2h2M9 6h2M5 6h2M1 10h2M5 10h2M9 10h2" stroke="#999" strokeWidth="2" />
            </Svg>
          </Corner>
        </Console>
        <TaskEdge />
      </Window>
    </>
  )
}

export default App
